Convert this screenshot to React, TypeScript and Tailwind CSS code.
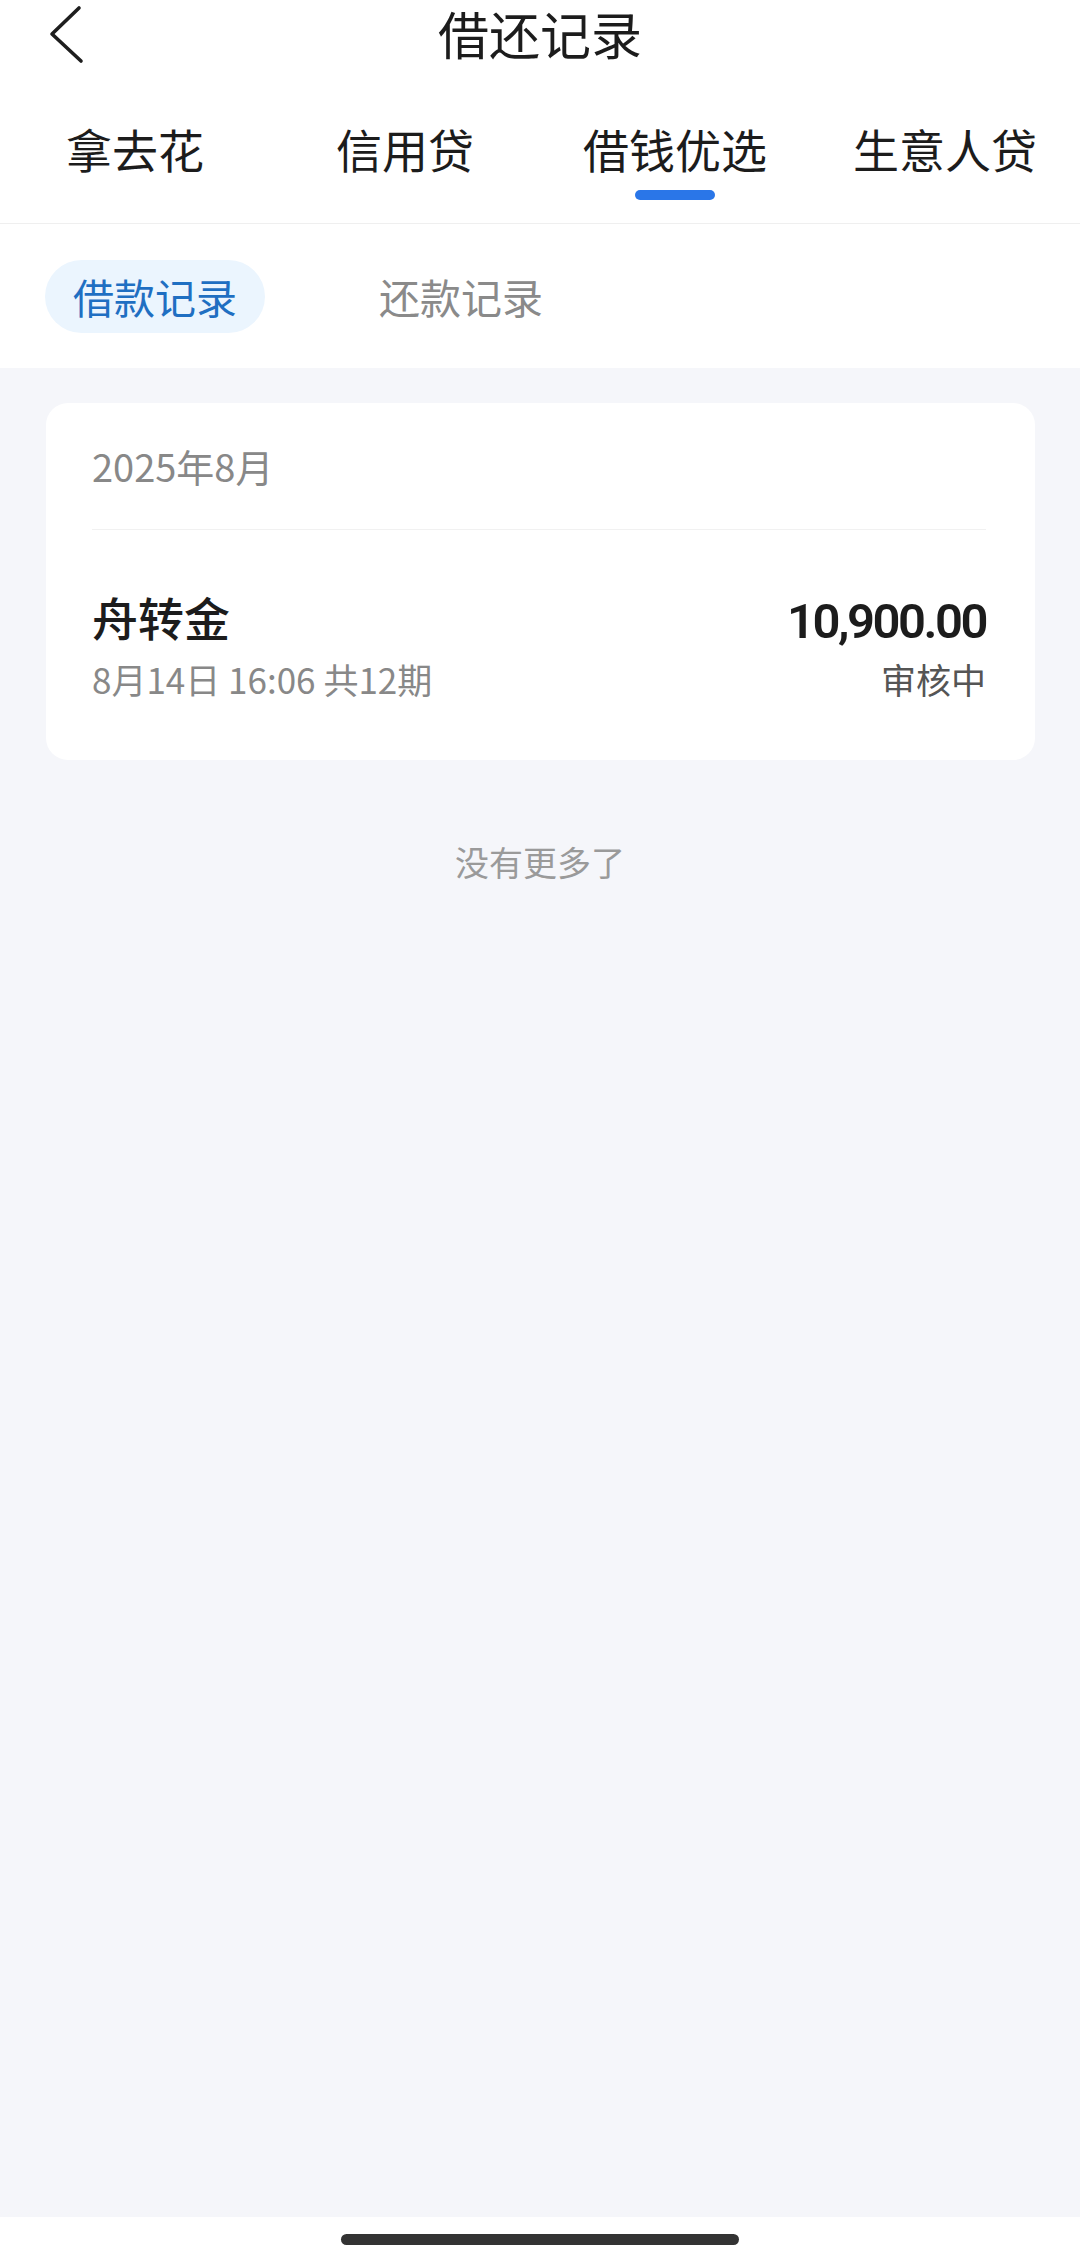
import React from "react";

const FONT = { fontFamily: '"Noto Sans CJK SC", "Noto Sans", sans-serif' };

export default function App() {
  const tabs = ["拿去花", "信用贷", "借钱优选", "生意人贷"];
  const active = 2;
  return (
    <div className="flex min-h-[2261px] w-[1080px] flex-col bg-white" style={FONT}>
      {/* Header */}
      <div className="relative flex h-[66px] items-center justify-center">
        <svg
          className="absolute left-[46px] top-[4px]"
          width="44"
          height="60"
          viewBox="0 0 44 60"
          fill="none"
        >
          <polyline
            points="33,4 6,30 35,57"
            stroke="#1e1e1e"
            strokeWidth="3.6"
            strokeLinecap="round"
            strokeLinejoin="round"
          />
        </svg>
        <div className="text-[51px] leading-[60px] text-[#1c1c1c]">借还记录</div>
      </div>

      {/* Tabs */}
      <div className="grid h-[158px] grid-cols-4 border-b border-[#efefef]">
        {tabs.map((t, i) => (
          <div key={t} className="flex flex-col items-center pt-[52px]">
            <div className="text-[46px] leading-[60px] text-[#1c1c1c]">{t}</div>
            {i === active && (
              <div className="mt-[12px] h-[10px] w-[80px] rounded-full bg-[#2a76e8]" />
            )}
          </div>
        ))}
      </div>

      {/* Sub tabs */}
      <div className="flex gap-[86px] bg-white pb-[35px] pl-[45px] pt-[36px]">
        <div className="flex h-[73px] w-[220px] items-center justify-center rounded-full bg-[#ebf5fe] text-[41px] text-[#1f6fc2]">
          借款记录
        </div>
        <div className="flex h-[73px] w-[220px] items-center justify-center text-[41px] text-[#8a8a8a]">
          还款记录
        </div>
      </div>

      {/* Content */}
      <div className="flex flex-1 flex-col bg-[#f5f6fa] pt-[35px]">
        <div className="ml-[46px] mr-[45px] rounded-[22px] bg-white pl-[46px] pr-[49px]">
          <div className="flex h-[127px] items-center border-b border-[#f1f1f1]">
            <div className="text-[38px] leading-[46px] text-[#888888]">2025年8月</div>
          </div>
          <div className="flex justify-between pb-[59px] pt-[58px]">
            <div className="flex flex-col">
              <div className="text-[46px] font-medium leading-[56px] text-[#1c1c1c]">舟转金</div>
              <div className="mt-[13px] text-[35px] leading-[44px] text-[#888888]">
                8月14日 16:06 共12期
              </div>
            </div>
            <div className="flex flex-col items-end">
              <div
                className="mt-[6px] text-[49px] font-semibold leading-[56px] tracking-[-2.5px] text-[#1c1c1c]"
                style={{ fontFamily: 'Roboto, "Noto Sans", sans-serif' }}
              >
                10,900.00
              </div>
              <div className="mt-[7px] text-[35px] leading-[44px] text-[#555555]">审核中</div>
            </div>
          </div>
        </div>
        <div className="mt-[79px] text-center text-[34px] leading-[46px] text-[#9a9a9a]">
          没有更多了
        </div>
      </div>

      {/* Bottom bar */}
      <div className="flex h-[44px] items-start justify-center bg-white pt-[17px]">
        <div className="h-[11px] w-[398px] rounded-full bg-[#333333]" />
      </div>
    </div>
  );
}
